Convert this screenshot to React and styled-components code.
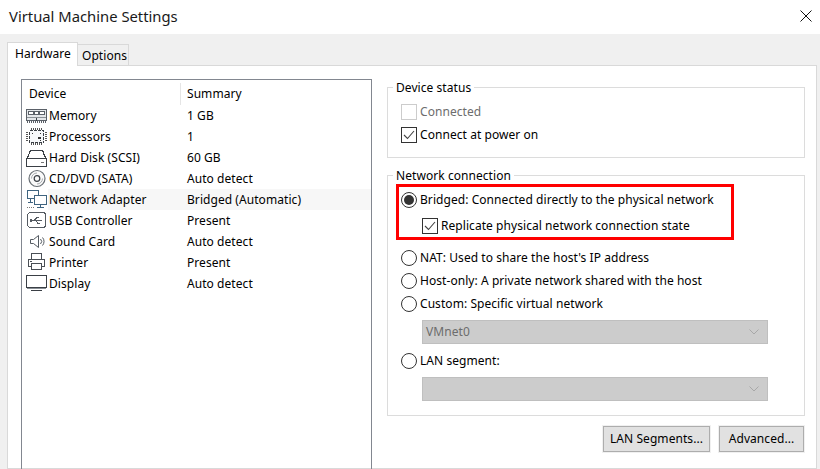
import React from "react";
import styled, { createGlobalStyle } from "styled-components";

const Global = createGlobalStyle`
  html, body { margin: 0; padding: 0; background: #f0f0f0; }
  * { box-sizing: border-box; }
`;
const Window = styled.div`
  width: 820px; height: 469px; overflow: hidden; display: flex; flex-direction: column;
  background: #f0f0f0; color: #000;
  font-family: "Noto Sans", "Open Sans", sans-serif; font-size: 12px; line-height: 16px; letter-spacing: 0.06px;
`;
const TitleBar = styled.div`
  height: 34px; flex: none; background: #fff; display: flex; align-items: center;
  justify-content: space-between; padding: 0 8px 3px 9px;
`;
const Title = styled.div` font-size: 14.8px; line-height: 22px; color: #1a1a1a; letter-spacing: 0; `;
const Body = styled.div` flex: 1; min-height: 0; display: flex; flex-direction: column; padding: 8px 3px 0 7px; `;
const TabStrip = styled.div` display: flex; align-items: flex-end; height: 24px; flex: none; position: relative; z-index: 1; margin-bottom: -1px; `;
const Tab = styled.div`
  display: flex; align-items: center; justify-content: center;
  width: ${p => p.$w}px; height: ${p => (p.$active ? 24 : 22)}px;
  background: ${p => (p.$active ? "#fff" : "#f0f0f0")};
  border: 1px solid #d9d9d9; border-bottom: ${p => (p.$active ? "none" : "1px solid #d9d9d9")};
  border-left: ${p => (p.$active ? "1px solid #d9d9d9" : "none")};
  padding: ${p => (p.$active ? "0 0 2px 1px" : "1px 0 0 3px")};
`;
const Panel = styled.div`
  flex: 1; min-height: 0; background: #fff; border: 1px solid #d9d9d9; display: flex; gap: 15px; padding: 13px 11px 0 13px;
`;
const DeviceList = styled.div`
  width: 351px; flex: none; height: 420px; border: 1px solid #828790; border-bottom: none; padding: 1px 0 0 0;
`;
const HeadRow = styled.div` display: flex; height: 24px; align-items: flex-start; padding-top: 2px; `;
const HeadCell = styled.div`
  width: ${p => p.$w}px; height: 22px; padding-left: ${p => p.$pl}px; display: flex; align-items: center;
  border-right: ${p => (p.$div ? "1px solid #e5e5e5" : "none")};
`;
const Row = styled.div` display: flex; height: 21px; align-items: center; `;
const IconSlot = styled.div` width: 26px; flex: none; height: 21px; display: flex; align-items: center; justify-content: flex-end; `;
const RowMain = styled.div`
  flex: 1; height: 21px; display: flex; align-items: center; background: ${p => (p.$sel ? "#f7f7f7" : "transparent")};
`;
const DeviceName = styled.div` width: 139px; flex: none; padding-left: 1px; `;
const Side = styled.div` flex: 1; min-width: 0; display: flex; flex-direction: column; padding-top: 8px; `;
const Group = styled.fieldset`
  margin: 0; border: 1px solid #dcdcdc; padding: 0; height: ${p => p.$h}px; margin-bottom: ${p => p.$mb || 0}px; min-width: 0;
  position: relative;
`;
const Legend = styled.div`
  position: absolute; top: -8px; left: 5px; background: #fff; padding: 0 3px; line-height: 16px;
`;
const StatusBody = styled.div` display: flex; flex-direction: column; gap: 7px; padding: 16px 0 0 13px; `;
const OptionRow = styled.div`
  display: flex; align-items: center; gap: 3px; height: 16px; margin-left: ${p => p.$indent || 0}px; margin-top: ${p => p.$mt || 0}px;
  color: ${p => (p.$disabled ? "#6d6d6d" : "#000")};
`;
const CheckBox = styled.div`
  width: 16px; height: 16px; flex: none; border: 1px solid ${p => (p.$disabled ? "#cccccc" : "#333")};
  background: #fff; display: flex; align-items: center; justify-content: center;
`;
const Radio = styled.div`
  width: 16px; height: 16px; flex: none; border-radius: 50%; border: 1px solid #333; background: #fff;
  display: flex; align-items: center; justify-content: center;
`;
const RadioDot = styled.div` width: 10px; height: 10px; border-radius: 50%; background: #333; `;
const Highlight = styled.div`
  position: absolute; left: 8px; top: 8px; width: 338px; height: 56px; border: 3px solid #f00; pointer-events: none;
`;
const NetBody = styled.div` display: flex; flex-direction: column; padding: 16px 0 0 13px; `;
const Select = styled.div`
  width: 346px; height: 24px; margin: ${p => p.$mt}px 0 0 21px; background: #cccccc; border: 1px solid #bfbfbf;
  display: flex; align-items: center; justify-content: space-between; padding: 0 8px 0 3px; color: #6d6d6d;
`;
const ButtonRow = styled.div` display: flex; justify-content: flex-end; gap: 9px; margin-top: 10px; padding-right: 1px; `;
const Button = styled.div`
  width: ${p => p.$w}px; height: 26px; background: #e1e1e1; border: 1px solid #adadad; outline: 1px solid #f0f0f0;
  display: flex; align-items: center; justify-content: center;
`;

const Check = () => (
  <svg width="12" height="10" viewBox="0 0 12 10" fill="none"><path d="M1 5l3.5 3.5L11 1" stroke="#444" strokeWidth="1.1" /></svg>
);
const Chevron = () => (
  <svg width="10" height="6" viewBox="0 0 10 6" fill="none"><path d="M.5.5L5 5 9.5.5" stroke="#a8a8a8" /></svg>
);
const Close = () => (
  <svg width="12" height="12" viewBox="0 0 12 12" fill="none"><path d="M.5.5l11 11M11.500.5l-11 11" stroke="#111" /></svg>
);
const S = "#5a6068";
const D = "#3a3f45";
const I = ({ children, crisp = true }) => (
  <svg width="23" height="21" viewBox="0 0 23 21" fill="none" shapeRendering={crisp ? "crispEdges" : "auto"}>{children}</svg>
);
const icons = {
  memory: (
    <I>
      <rect x="1.500" y="4.500" width="20" height="11" fill="#e4e7ea" stroke={S} />
      <rect x="3.500" y="6.500" width="5" height="3" fill="#fff" stroke={S} />
      <rect x="9.500" y="6.500" width="4" height="3" fill="#fff" stroke={S} />
      <rect x="14.500" y="6.500" width="5" height="3" fill="#fff" stroke={S} />
      <path d="M2 12.500h19" stroke="#8a9096" />
      <path d="M2 16.500h20M2 17.500h20" stroke={S} strokeDasharray="1 1" />
      <path d="M11.500 13v3" stroke={D} />
    </I>
  ),
  cpu: (
    <I>
      <rect x="4.500" y="4.500" width="14" height="12" fill="#f6f8fa" stroke={D} strokeDasharray="3 1" />
      <path d="M6 2.500h11M6 3.500h11M6 17.500h11M6 18.500h11M1.500 6v9M2.500 6v9M20.500 6v9M21.500 6v9" stroke="#555" strokeDasharray="1 1" />
      <path d="M7 7h1M15 7h1M15 14h1M13 11h2v1h-2z" stroke="#333" />
    </I>
  ),
  disk: (
    <I>
      <path d="M2 12L5.500 3.500H17.500L21 12" stroke={D} strokeWidth="1.2" />
      <rect x="1.500" y="11.500" width="20" height="8" rx="1" fill="#fff" stroke={D} strokeWidth="1.2" />
      <path d="M16 15.500h3" stroke="#777" />
    </I>
  ),
  cd: (
    <I crisp={false}>
      <circle cx="12" cy="10.500" r="8" stroke="#6a7076" fill="#fafafa" strokeWidth="1.2" />
      <circle cx="12" cy="10.500" r="2.800" stroke={D} strokeWidth="1.2" />
      <path d="M12 5A5.500 5.500 0 0 0 6.500 10.500M12 16A5.500 5.500 0 0 0 17.500 10.500" stroke="#a8acb0" />
    </I>
  ),
  net: (
    <I>
      <rect x="2.500" y="1.500" width="11" height="8" fill="#fff" stroke="#3f6480" />
      <rect x="9.500" y="6.500" width="12" height="9" fill="#fff" stroke="#3f6480" />
      <path d="M12 18.500h7M15.500 16v2M3 13.500h5M5.500 10v3" stroke="#3f6480" />
      <path d="M2 18.500h8" stroke="#777" strokeDasharray="1 1" />
    </I>
  ),
  usb: (
    <I>
      <rect x="2.500" y="2.500" width="18" height="15" rx="3" fill="#fff" stroke="#555b62" strokeWidth="1.2" />
      <path d="M6 10.500h11M9 10.500l3-3h2M11 10.500l2 3h2" stroke="#555b62" />
      <path d="M5 9h2v3H5z" fill="#555b62" />
    </I>
  ),
  sound: (
    <I crisp={false}>
      <path d="M5.500 8.500H8.500L13.500 4.500V16.500L8.500 12.500H5.500Z" fill="#fff" stroke="#555b62" />
      <path d="M15.500 8a3.500 3.500 0 0 1 0 5M17.500 6.500a6 6 0 0 1 0 8" stroke="#555b62" />
    </I>
  ),
  printer: (
    <I>
      <rect x="6.500" y="1.500" width="10" height="6" fill="#fff" stroke="#4a4f55" />
      <rect x="3.500" y="7.500" width="16" height="7" fill="#fff" stroke="#4a4f55" />
      <rect x="6.500" y="11.500" width="10" height="6" fill="#fff" stroke="#4a4f55" />
      <path d="M5 9.500h2" stroke="#4a4f55" />
    </I>
  ),
  display: (
    <I>
      <rect x="1.500" y="2.500" width="20" height="12" fill="#fff" stroke={D} strokeWidth="1.4" />
      <path d="M2 15.500h19" stroke="#8a9096" />
      <path d="M6 17.500h11" stroke={D} strokeWidth="1.200" />
    </I>
  ),
};
const devices = [
  ["memory", "Memory", "1 GB"],
  ["cpu", "Processors", "1"],
  ["disk", "Hard Disk (SCSI)", "60 GB"],
  ["cd", "CD/DVD (SATA)", "Auto detect"],
  ["net", "Network Adapter", "Bridged (Automatic)", true],
  ["usb", "USB Controller", "Present"],
  ["sound", "Sound Card", "Auto detect"],
  ["printer", "Printer", "Present"],
  ["display", "Display", "Auto detect"],
];

export default function App() {
  return (
    <Window>
      <Global />
      <TitleBar>
        <Title>Virtual Machine Settings</Title>
        <Close />
      </TitleBar>
      <Body>
        <TabStrip>
          <Tab $active $w={71}>Hardware</Tab>
          <Tab $w={51}>Options</Tab>
        </TabStrip>
        <Panel>
          <DeviceList>
            <HeadRow>
              <HeadCell $w={159} $pl={7} $div>Device</HeadCell>
              <HeadCell $w={190} $pl={6}>Summary</HeadCell>
            </HeadRow>
            {devices.map(([icon, name, summary, sel]) => (
              <Row key={name}>
                <IconSlot>{icons[icon]}</IconSlot>
                <RowMain $sel={sel}>
                  <DeviceName>{name}</DeviceName>
                  <div>{summary}</div>
                </RowMain>
              </Row>
            ))}
          </DeviceList>
          <Side>
            <Group $h={71} $mb={17}>
              <Legend>Device status</Legend>
              <StatusBody>
                <OptionRow $disabled><CheckBox $disabled />Connected</OptionRow>
                <OptionRow><CheckBox><Check /></CheckBox>Connect at power on</OptionRow>
              </StatusBody>
            </Group>
            <Group $h={241}>
              <Legend>Network connection</Legend>
              <NetBody>
                <OptionRow><Radio><RadioDot /></Radio>Bridged: Connected directly to the physical network</OptionRow>
                <OptionRow $indent={21} $mt={10}><CheckBox><Check /></CheckBox>Replicate physical network connection state</OptionRow>
                <OptionRow $mt={16}><Radio />NAT: Used to share the host's IP address</OptionRow>
                <OptionRow $mt={7}><Radio />Host-only: A private network shared with the host</OptionRow>
                <OptionRow $mt={7}><Radio />Custom: Specific virtual network</OptionRow>
                <Select $mt={8}>VMnet0<Chevron /></Select>
                <OptionRow $mt={9}><Radio />LAN segment:</OptionRow>
                <Select $mt={8}><span /><Chevron /></Select>
              </NetBody>
              <Highlight />
            </Group>
            <ButtonRow>
              <Button $w={107}>LAN Segments...</Button>
              <Button $w={85}>Advanced...</Button>
            </ButtonRow>
          </Side>
        </Panel>
      </Body>
    </Window>
  );
}
